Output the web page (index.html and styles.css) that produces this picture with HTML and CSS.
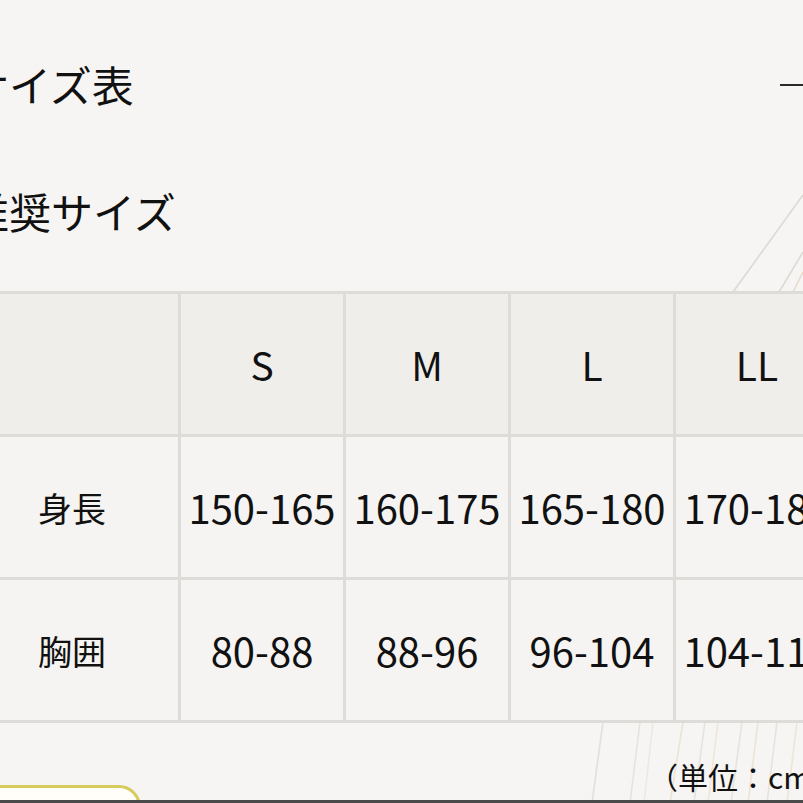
FILE: index.html
```html
<!DOCTYPE html>
<html lang="ja">
<head>
<meta charset="utf-8">
<title>サイズ表</title>
<link rel="stylesheet" href="styles.css">
</head>
<body>
<svg class="deco" width="803" height="803" viewBox="0 0 803 803" aria-hidden="true">
  <g fill="none" stroke-width="1.6">
    <line x1="803" y1="195" x2="733" y2="292" stroke="#dcd9d4"/>
    <line x1="803" y1="252" x2="779" y2="292" stroke="#ddd9d3"/>
    <line x1="803" y1="272" x2="793" y2="292" stroke="#ecd8cc"/>
    <line x1="603" y1="722" x2="592" y2="803" stroke="#e2dfda"/>
    <line x1="640" y1="722" x2="630" y2="803" stroke="#e6e2dc"/>
    <line x1="653" y1="722" x2="644" y2="803" stroke="#ece9e4"/>
    <line x1="683" y1="722" x2="670" y2="803" stroke="#ebe3d6"/>
    <line x1="705" y1="722" x2="694" y2="803" stroke="#e6e2dc"/>
    <line x1="718" y1="722" x2="708" y2="803" stroke="#efe6d8"/>
    <line x1="742" y1="722" x2="731" y2="803" stroke="#e6e2dc"/>
    <line x1="758" y1="722" x2="748" y2="803" stroke="#ece3d5"/>
    <line x1="777" y1="722" x2="767" y2="803" stroke="#e6e2dc"/>
    <line x1="797" y1="722" x2="787" y2="803" stroke="#ede5d9"/>
  </g>
</svg>
<span class="rule"></span>
<main class="page">
  <h1 class="title">サイズ表</h1>
  <h2 class="subtitle">推奨サイズ</h2>
  <table class="size-table">
    <thead>
      <tr>
        <th class="label"></th>
        <th>S</th>
        <th>M</th>
        <th>L</th>
        <th>LL</th>
      </tr>
    </thead>
    <tbody>
      <tr>
        <td class="label">身長</td>
        <td>150-165</td>
        <td>160-175</td>
        <td>165-180</td>
        <td>170-185</td>
      </tr>
      <tr>
        <td class="label">胸囲</td>
        <td>80-88</td>
        <td>88-96</td>
        <td>96-104</td>
        <td>104-112</td>
      </tr>
    </tbody>
  </table>
  <div class="footer">
    <span class="btn"></span>
    <p class="unit">（単位：cm）</p>
  </div>
</main>
<span class="bottom-bar"></span>
</body>
</html>
```

FILE: styles.css
```css
html, body {
  margin: 0;
  padding: 0;
}
body {
  width: 803px;
  height: 803px;
  overflow: hidden;
  background: #f6f5f3;
  color: #111111;
  font-family: "Noto Sans CJK JP", "Noto Sans", sans-serif;
  position: relative;
}
.deco {
  position: absolute;
  left: 0;
  top: 0;
}
.rule {
  position: absolute;
  left: 780px;
  top: 84px;
  width: 30px;
  height: 2px;
  background: #2a2a2a;
}
.bottom-bar {
  position: absolute;
  left: 0;
  bottom: 0;
  width: 803px;
  height: 3px;
  background: #4a4a4a;
}
.page {
  position: relative;
  margin-left: -37px;
  padding-top: 54px;
}
.title,
.subtitle {
  margin: 0;
  padding-left: 4px;
  font-size: 42px;
  font-weight: 400;
  line-height: 60px;
  white-space: nowrap;
}
.subtitle {
  margin-top: 67px;
}
.size-table {
  margin-top: 50px;
  border-collapse: separate;
  border-spacing: 3px;
  background: #dedcd9;
  table-layout: fixed;
  width: 875px;
}
.size-table th,
.size-table td {
  box-sizing: border-box;
  width: 162px;
  height: 140px;
  padding: 0;
  text-align: center;
  vertical-align: middle;
  font-size: 40px;
  font-weight: 400;
  white-space: nowrap;
  overflow: hidden;
}
.size-table th {
  background: #efeeeb;
  font-size: 39px;
}
.size-table td {
  background: #f5f4f2;
}
.size-table .label {
  width: 212px;
  font-size: 34px;
}
.footer {
  display: flex;
  align-items: flex-start;
  justify-content: space-between;
  height: 80px;
}
.btn {
  display: block;
  margin-top: 62px;
  width: 178px;
  height: 40px;
  box-sizing: border-box;
  border: 3px solid #d6cb5c;
  border-radius: 0 22px 0 0;
  background: #fffef9;
}
.unit {
  margin: 33px -40px 0 0;
  font-size: 30px;
  line-height: 40px;
  white-space: nowrap;
  width: 195px;
}
```
